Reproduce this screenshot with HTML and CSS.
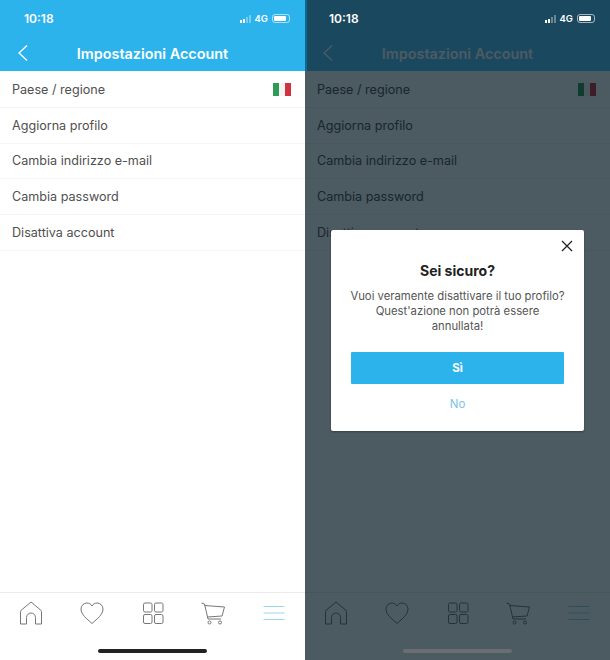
FILE: index.html
```html
<!DOCTYPE html>
<html lang="it">
<head>
    <meta charset="UTF-8">
    <meta name="viewport" content="width=device-width, initial-scale=1.0">
    <title>Impostazioni Account</title>
    <link rel="stylesheet" href="styles.css">
</head>
<body>

<svg class="sprites" width="0" height="0">
    <symbol id="i-home" viewBox="0 0 24 24"><path d="M1.500 23V10.600q0-.8.6-1.300L12 1l9.900 8.300q.6.500.6 1.300V23h-6v-6.500a4.500 4.500 0 0 0-9 0V23z"/></symbol>
    <symbol id="i-heart" viewBox="0 0 24 24"><path d="M12 22.500C6.500 17.500 1 13.500 1 8A6 6 0 0 1 7 2c2.100 0 3.900 1 5 3 1.100-2 2.900-3 5-3a6 6 0 0 1 6 6c0 5.500-5.500 9.500-11 14.500z"/></symbol>
    <symbol id="i-grid" viewBox="0 0 24 24"><rect x="2.500" y="2" width="8.500" height="9" rx="1.500"/><rect x="13.500" y="2" width="8.500" height="9" rx="1.500"/><rect x="2.500" y="13.500" width="8.500" height="9" rx="1.500"/><rect x="13.500" y="13.500" width="8.500" height="9" rx="1.500"/></symbol>
    <symbol id="i-cart" viewBox="0 0 24 24"><path d="M.5 2l3 1 3.500 15h13"/><path d="M3.700 4.500L23.500 6l-2.500 9-14.800 1"/><circle cx="8.500" cy="21.500" r="1.500"/><circle cx="19" cy="21.500" r="1.500"/></symbol>
    <symbol id="i-menu" viewBox="0 0 24 24"><path d="M1.500 5.500h21M1.500 12h21M1.500 18.500h21"/></symbol>
</svg>

<div class="phones">
    <div class="phone">
        <header class="top">
            <div class="status">
                <span class="time">10:18</span>
                <span class="net">
                    <span class="bars"><i class="on h1"></i><i class="on h2"></i><i class="h3"></i><i class="h4"></i></span>
                    <span class="lte">4G</span>
                    <span class="battery"><i></i></span>
                </span>
            </div>
            <div class="title-row">
                <svg class="back" viewBox="0 0 12 18"><path d="M10 1.500L2 9l8 7.500"/></svg>
                <h1>Impostazioni Account</h1>
            </div>
        </header>
        <ul class="menu">
            <li>Paese / regione <span class="flag"><i class="g"></i><i class="w"></i><i class="r"></i></span></li>
            <li>Aggiorna profilo</li>
            <li>Cambia indirizzo e-mail</li>
            <li>Cambia password</li>
            <li>Disattiva account</li>
        </ul>
        <nav class="tabs">
            <svg class="tab"><use href="#i-home"/></svg>
            <svg class="tab"><use href="#i-heart"/></svg>
            <svg class="tab"><use href="#i-grid"/></svg>
            <svg class="tab"><use href="#i-cart"/></svg>
            <svg class="tab active"><use href="#i-menu"/></svg>
        </nav>
        <div class="home-bar"><span></span></div>
    </div>

    <div class="phone dimmed">
        <header class="top">
            <div class="status"></div>
            <div class="title-row">
                <svg class="back" viewBox="0 0 12 18"><path d="M10 1.500L2 9l8 7.500"/></svg>
                <h1>Impostazioni Account</h1>
            </div>
        </header>
        <ul class="menu">
            <li>Paese / regione <span class="flag"><i class="g"></i><i class="w"></i><i class="r"></i></span></li>
            <li>Aggiorna profilo</li>
            <li>Cambia indirizzo e-mail</li>
            <li>Cambia password</li>
            <li>Disattiva account</li>
        </ul>
        <nav class="tabs">
            <svg class="tab"><use href="#i-home"/></svg>
            <svg class="tab"><use href="#i-heart"/></svg>
            <svg class="tab"><use href="#i-grid"/></svg>
            <svg class="tab"><use href="#i-cart"/></svg>
            <svg class="tab active"><use href="#i-menu"/></svg>
        </nav>

        <div class="overlay">
            <div class="status">
                <span class="time">10:18</span>
                <span class="net">
                    <span class="bars"><i class="on h1"></i><i class="on h2"></i><i class="h3"></i><i class="h4"></i></span>
                    <span class="lte">4G</span>
                    <span class="battery"><i></i></span>
                </span>
            </div>
            <div class="modal">
                <svg class="close" viewBox="0 0 12 12"><path d="M1 1l10 10M11 1L1 11"/></svg>
                <h2>Sei sicuro?</h2>
                <p>Vuoi veramente disattivare il tuo profilo?<br>Quest'azione non potrà essere<br>annullata!</p>
                <button class="yes">Sì</button>
                <button class="no">No</button>
            </div>
            <div class="home-bar"><span></span></div>
        </div>
    </div>
</div>

</body>
</html>
```

FILE: styles.css
```css
* {
    box-sizing: border-box;
}

body {
    margin: 0;
    font-family: "Inter", "Liberation Sans", sans-serif;
    background-color: #fff;
}

.sprites {
    display: none;
}

.phones {
    display: flex;
    width: 610px;
    height: 660px;
    overflow: hidden;
}

.phone {
    position: relative;
    width: 305px;
    height: 660px;
    display: flex;
    flex-direction: column;
    background-color: #fff;
}

/* header */
.top {
    height: 71px;
    flex-shrink: 0;
    background-color: #2db3ec;
    color: #fff;
}

.status {
    height: 36px;
    padding: 1px 15px 0 24px;
    display: flex;
    align-items: center;
    justify-content: space-between;
    color: #fff;
}

.time {
    font-size: 12px;
    font-weight: 600;
}

.net {
    display: flex;
    align-items: center;
    gap: 4px;
}

.bars {
    display: flex;
    align-items: flex-end;
    gap: 1px;
    height: 8px;
}

.bars i {
    width: 2px;
    background-color: rgba(255, 255, 255, .35);
}

.bars i.on {
    background-color: #fff;
}

.h1 { height: 3px; }
.h2 { height: 4px; }
.h3 { height: 6px; }
.h4 { height: 8px; }

.lte {
    font-size: 9.500px;
    font-weight: 600;
}

.battery {
    position: relative;
    width: 18px;
    height: 9px;
    padding: 1px;
    border: 1px solid rgba(255, 255, 255, .6);
    border-radius: 3px;
}

.battery i {
    display: block;
    width: 12px;
    height: 5px;
    border-radius: 1px;
    background-color: #fff;
}

.title-row {
    position: relative;
    height: 35px;
    display: flex;
    align-items: center;
    justify-content: center;
}

.title-row h1 {
    margin: 0;
    font-size: 14.400px;
    font-weight: 600;
}

.back {
    position: absolute;
    left: 17px;
    top: 8px;
    width: 12px;
    height: 18px;
    fill: none;
    stroke: #fff;
    stroke-width: 1.300;
}

/* settings list */
.menu {
    flex: 1;
    margin: 0;
    padding: 1px 0 0;
    list-style: none;
}

.menu li {
    height: 35.800px;
    padding: 0 14px 0 12px;
    display: flex;
    align-items: center;
    justify-content: space-between;
    border-bottom: 1px solid #f5f5f5;
    font-size: 12.600px;
    color: #505050;
}

.flag {
    display: flex;
    width: 18px;
    height: 13px;
}

.flag i {
    flex: 1;
}

.flag .g { background-color: #2f9a54; }
.flag .w { background-color: #f4f4f4; }
.flag .r { background-color: #d03340; }

/* bottom bar */
.tabs {
    height: 49px;
    flex-shrink: 0;
    padding: 0 19px 9px;
    display: flex;
    align-items: center;
    justify-content: space-between;
    border-top: 1px solid #ececec;
}

.dimmed .tabs {
    margin-bottom: 19px;
}

.tab {
    width: 24px;
    height: 24px;
    fill: none;
    stroke: #777;
    stroke-width: 1;
}

.tab.active {
    stroke: #9fd5ec;
}

.home-bar {
    height: 19px;
    flex-shrink: 0;
    display: flex;
    justify-content: center;
}

.home-bar span {
    width: 109px;
    height: 4px;
    margin-top: 8px;
    border-radius: 2px;
    background-color: #222;
}

/* dimmed screen with dialog */
.dimmed .top {
    background-color: #58c2f2;
}

.overlay {
    position: absolute;
    inset: 0;
    background-color: rgba(0, 20, 31, .7);
}

.overlay::before {
    content: "";
    position: absolute;
    left: 0;
    top: 0;
    width: 2px;
    height: 71px;
    background-color: #0b6a90;
}

.overlay .home-bar {
    position: absolute;
    left: 0;
    right: 0;
    bottom: 0;
}

.overlay .home-bar span {
    background-color: #6a6e73;
}

.modal {
    position: absolute;
    left: 26px;
    top: 230px;
    width: 253px;
    height: 201px;
    padding: 32px 19px 0;
    border-radius: 2px;
    background-color: #fff;
    text-align: center;
    box-shadow: 0 1px 2px rgba(0, 0, 0, .3);
}

.close {
    position: absolute;
    right: 11px;
    top: 10px;
    width: 12px;
    height: 12px;
    fill: none;
    stroke: #222;
    stroke-width: 1.300;
}

.modal h2 {
    margin: 0;
    font-size: 14px;
    font-weight: 700;
    color: #222;
}

.modal p {
    margin: 10px 0 0;
    font-size: 11.300px;
    line-height: 15px;
    color: #555;
}

.modal button {
    display: block;
    width: 213px;
    margin-left: 1px;
    border: none;
    font-family: inherit;
}

.modal .yes {
    height: 32px;
    margin-top: 18px;
    border-radius: 1px;
    background-color: #2db3ec;
    color: #fff;
    font-size: 11.500px;
    font-weight: 700;
}

.modal .no {
    margin-top: 13px;
    padding: 0;
    background: none;
    color: #7cc3e4;
    font-size: 11.500px;
}
```
